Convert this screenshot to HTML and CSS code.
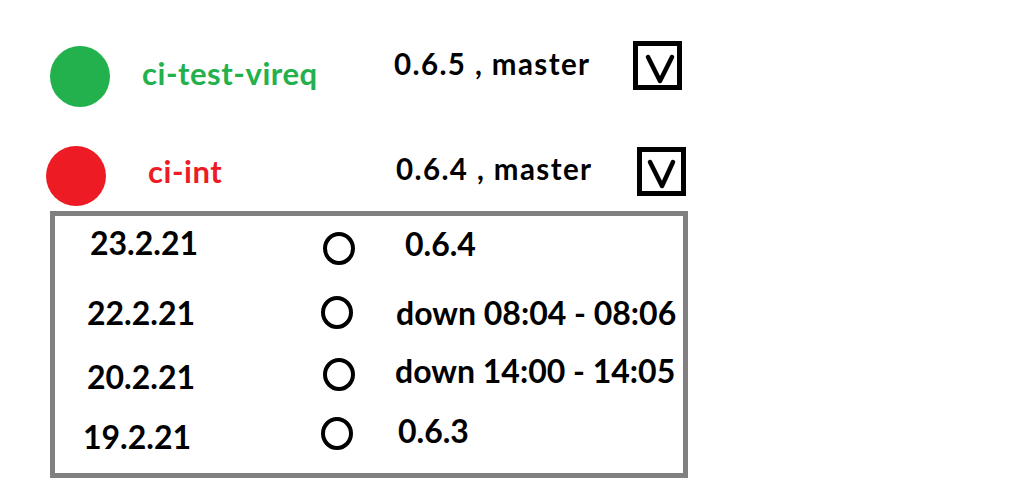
FILE: index.html
```html
<!DOCTYPE html>
<html>
<head>
<meta charset="utf-8">
<link rel="stylesheet" href="styles.css">
</head>
<body>
<div class="page">
  <div class="env env--first">
    <span class="dot dot--ok"></span>
    <span class="env-name env-name--ok">ci-test-vireq</span>
    <span class="env-version">0.6.5 , master</span>
    <span class="toggle">
      <svg viewBox="0 0 39 39" width="39" height="39"><polyline points="10,11 22,35 34,11" /></svg>
    </span>
  </div>
  <div class="env env--second">
    <span class="dot dot--down"></span>
    <span class="env-name env-name--down">ci-int</span>
    <span class="env-version">0.6.4 , master</span>
    <span class="toggle">
      <svg viewBox="0 0 39 39" width="39" height="39"><polyline points="8,10 20,34 31,10" /></svg>
    </span>
  </div>
  <div class="history">
    <div class="event event--1">
      <span class="event-date">23.2.21</span>
      <span class="event-ring"></span>
      <span class="event-note">0.6.4</span>
    </div>
    <div class="event event--2">
      <span class="event-date">22.2.21</span>
      <span class="event-ring"></span>
      <span class="event-note">down 08:04 - 08:06</span>
    </div>
    <div class="event event--3">
      <span class="event-date">20.2.21</span>
      <span class="event-ring"></span>
      <span class="event-note">down 14:00 - 14:05</span>
    </div>
    <div class="event event--4">
      <span class="event-date">19.2.21</span>
      <span class="event-ring"></span>
      <span class="event-note">0.6.3</span>
    </div>
  </div>
</div>
</body>
</html>
```
FILE: styles.css
```css
html, body {
  margin: 0;
  padding: 0;
  background: #ffffff;
}

.page {
  width: 1024px;
  height: 504px;
  padding-top: 41px;
  box-sizing: border-box;
  font-family: Lato, "Open Sans", "Liberation Sans", sans-serif;
  font-weight: 700;
  color: #000000;
}

/* environment rows */
.env {
  display: flex;
  align-items: flex-start;
}

.env--first {
  padding-left: 50px;
  height: 66px;
}

.env--second {
  padding-left: 46px;
  margin-top: 39px;
  height: 60px;
}

.dot {
  display: block;
  width: 60px;
  height: 61px;
  border-radius: 50%;
  flex: none;
}

.env--first .dot { margin-top: 5px; }
.env--second .dot { height: 60px; }

.dot--ok { background: #22b14c; }
.dot--down { background: #ed1c24; }

.env-name,
.env-version {
  display: block;
  flex: none;
  white-space: nowrap;
}

.env-name {
  font-size: 31px;
  line-height: 31px;
  letter-spacing: 0.55px;
}

.env-version {
  font-size: 29.5px;
  line-height: 29px;
  letter-spacing: 1.4px;
}

.env-name--ok { color: #22b14c; }
.env-name--down { color: #ed1c24; }

.env--first .env-name { margin-left: 32px; width: 252px; margin-top: 17px; }
.env--first .env-version { width: 239px; margin-top: 8px; }

.env--second .env-name { margin-left: 42px; width: 248px; margin-top: 10px; }
.env--second .env-version { width: 241px; margin-top: 8px; }

.toggle {
  display: block;
  width: 49px;
  height: 49px;
  box-sizing: border-box;
  border: 5px solid #000000;
  flex: none;
}

.env--second .toggle { margin-top: 1px; }

.toggle svg {
  display: block;
}

.toggle polyline {
  fill: none;
  stroke: #000000;
  stroke-width: 4.5;
  stroke-linecap: round;
  stroke-linejoin: round;
}

/* history box */
.history {
  margin-top: 5px;
  margin-left: 50px;
  width: 638px;
  height: 267px;
  box-sizing: border-box;
  border: 5px solid #808080;
}

.event {
  display: grid;
  grid-template-columns: 267px 76px 1fr;
  align-items: start;
  font-size: 32px;
  line-height: 32px;
}

.event--1 { height: 70px; --date-x: 35px; --date-y: 11px; --ring-x: 1px; --ring-y: 16px; --note-x: 7px; --note-y: 12px; }
.event--2 { height: 62px; --date-x: 32px; --date-y: 11px; --ring-x: -1px; --ring-y: 10px; --note-x: -2px; --note-y: 11px; }
.event--3 { height: 60px; --date-x: 32px; --date-y: 13px; --ring-x: 1px; --ring-y: 10px; --note-x: -3px; --note-y: 7px; }
.event--4 { height: 65px; --date-x: 28px; --date-y: 13px; --ring-x: -1px; --ring-y: 9px; --note-x: 0px; --note-y: 7px; }

.event-date {
  display: block;
  margin-left: var(--date-x);
  margin-top: var(--date-y);
  white-space: nowrap;
}

.event-ring {
  display: block;
  width: 32px;
  height: 33px;
  box-sizing: border-box;
  border: 4px solid #000000;
  border-radius: 50%;
  margin-left: var(--ring-x);
  margin-top: var(--ring-y);
}

.event-note {
  display: block;
  margin-left: var(--note-x);
  margin-top: var(--note-y);
  white-space: nowrap;
}
```
